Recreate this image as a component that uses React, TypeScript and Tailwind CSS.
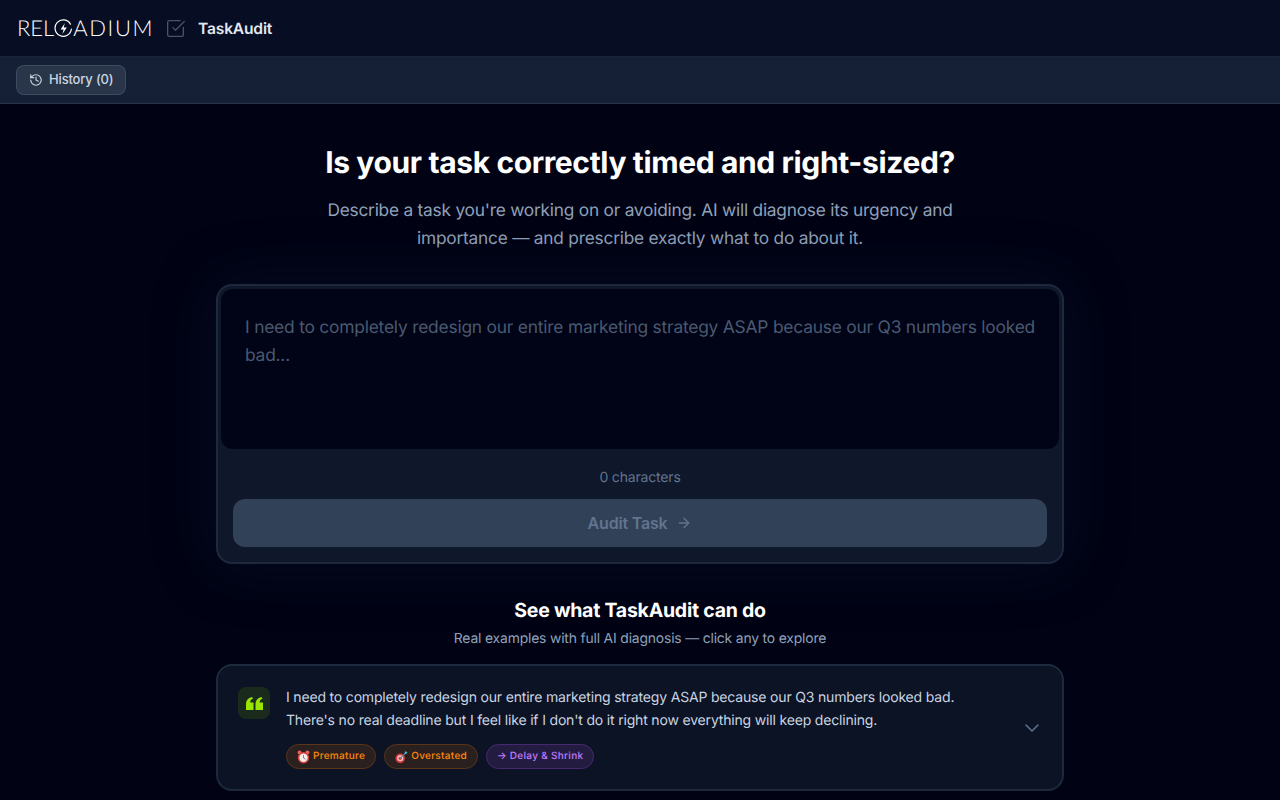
import React from 'react';
import { ArrowRight, ChevronDown, History, SquareCheckBig } from 'lucide-react';

const Pill = ({ className, children }: { className: string; children: React.ReactNode }) => (
  <span className={`inline-flex h-[25px] items-center gap-[3px] rounded-full border px-[10px] text-[10px] font-medium tracking-[0.3px] ${className}`}>
    {children}
  </span>
);

const AlarmClock = () => (
  <svg width="13" height="14" viewBox="0 0 13 14">
    <circle cx="2.600" cy="2.600" r="2" fill="#e8615a" />
    <circle cx="10.400" cy="2.600" r="2" fill="#e8615a" />
    <circle cx="6.500" cy="7.800" r="5.700" fill="#d9403c" />
    <circle cx="6.500" cy="7.800" r="4.200" fill="#f3eeea" />
    <path d="M6.500 5v3l2 1.200" stroke="#6b6b6b" strokeWidth=".8" fill="none" />
  </svg>
);

const Target = () => (
  <svg width="13" height="14" viewBox="0 0 14 14">
    <circle cx="5.600" cy="8.400" r="5.200" fill="#d8383f" />
    <circle cx="5.600" cy="8.400" r="3.300" fill="#f3c9c4" />
    <circle cx="5.600" cy="8.400" r="1.800" fill="#d8383f" />
    <path d="M5.600 8.400 11.500 2.500" stroke="#4d9aa8" strokeWidth="1.200" />
    <path d="M10.500 1.500 12 0.500 12.200 1.800 13.500 2 12.500 3.500 10.500 3.500z" fill="#47c2d6" />
  </svg>
);

const App: React.FC = () => {
  return (
    <div className="h-[800px] overflow-hidden bg-[#010314] font-['Inter',sans-serif] text-white antialiased [text-rendering:geometricPrecision]">
      <header className="flex h-[57px] items-center border-b border-[#1a2335] bg-[#070d22] pl-[17px]">
        <div className="flex items-center font-['Lato',sans-serif] text-[22px] font-light leading-none text-white">
          <span>REL</span>
          <svg width="19" height="19" viewBox="0 0 19 19" fill="none">
            <path d="M16.5 5.2A8.2 8.2 0 1 0 17.4 10" stroke="#fff" strokeWidth="1.2" strokeLinecap="round" />
            <path d="M10.8 4.2 6.6 10.4h3l-1.2 4.6 4.4-6.4H9.7z" fill="#fff" />
          </svg>
          <span className="tracking-[1.6px]">ADIUM</span>
        </div>
        <SquareCheckBig className="ml-[11px] h-[21px] w-[21px] text-slate-600" strokeWidth={1.5} />
        <span className="ml-[12px] mt-[2px] text-[15.6px] font-semibold tracking-[-0.0125em] text-slate-200">TaskAudit</span>
      </header>

      <div className="flex h-[47px] items-center border-b border-[#2a3447] bg-[#151f36] px-4">
        <button className="flex h-[30px] items-center gap-[6px] rounded-lg border border-slate-600/70 bg-[#293548] px-3 text-[13px] font-medium tracking-[-0.0125em] text-slate-300">
          <History className="h-[14px] w-[14px]" />
          History (0)
        </button>
      </div>

      <main className="flex flex-col items-center">
        <h1 className="mt-[41px] text-3xl font-bold leading-[36px] tracking-[-0.0125em] text-white">Is your task correctly timed and right-sized?</h1>
        <p className="mt-[16px] w-[672px] text-center text-[17.3px] leading-[28px] tracking-[-0.0125em] text-slate-400">
          Describe a task you're working on or avoiding. AI will diagnose its urgency and importance — and prescribe exactly what to do about it.
        </p>

        <section className="mt-[31px] w-[848px] rounded-2xl border-2 border-slate-800 bg-[#0f172b] shadow-[0_0_60px_rgba(15,23,50,0.45)]">
          <div className="mx-[3px] mt-[3px] h-[160px] rounded-xl bg-[#010317] pl-6 pr-5 pt-[25px] text-[17.4px] leading-[28px] tracking-[-0.0125em] text-[#4a5a70]">
            I need to completely redesign our entire marketing strategy ASAP because our Q3 numbers looked bad...
          </div>
          <div className="px-[15px] pb-[15px]">
            <div className="mt-[19px] text-center text-sm leading-[20px] tracking-[-0.0125em] text-slate-500">0 characters</div>
            <button className="mt-[11px] flex h-[48px] w-full items-center justify-center gap-[9px] rounded-xl bg-slate-700 text-base font-semibold tracking-[-0.0125em] text-slate-500">
              Audit Task
              <ArrowRight className="h-4 w-4" />
            </button>
          </div>
        </section>

        <h2 className="mt-[32px] text-[19.5px] font-bold leading-[28px] tracking-[-0.0125em] text-white">See what TaskAudit can do</h2>
        <p className="mt-[5px] text-[13.9px] leading-[20px] tracking-[-0.0125em] text-slate-400">Real examples with full AI diagnosis — click any to explore</p>

        <article className="mt-[15px] flex h-[127px] w-[848px] shrink-0 items-center rounded-2xl border-2 border-slate-800 bg-[#0c1325] pl-5 pr-[18px]">
          <div className="mb-[14px] mt-[21px] flex h-8 w-8 shrink-0 items-center justify-center self-start rounded-lg bg-[#1a2a1c]">
            <svg width="17" height="13" viewBox="0 0 17 13" className="fill-lime-400">
              <path d="M0 13V7.4C0 3.400 2.200 1 6 0l1 1.800C5 2.400 4.200 3.600 4.200 5.500H7.500V13zM9.500 13V7.400c0-4 2.200-6.400 6-7.400l1 1.800c-2 .6-2.800 1.800-2.800 3.700H17V13z" />
            </svg>
          </div>
          <div className="ml-4 min-w-0 flex-1">
            <p className="text-sm leading-[23px] tracking-[-0.0125em] text-slate-300">
              I need to completely redesign our entire marketing strategy ASAP because our Q3 numbers looked bad.<br />
              There's no real deadline but I feel like if I don't do it right now everything will keep declining.
            </p>
            <div className="mt-[12px] flex gap-2">
              <Pill className="border-[#5a3517] bg-[#2a2020] text-orange-400"><AlarmClock />Premature</Pill>
              <Pill className="border-[#5a3517] bg-[#2a2020] text-orange-400"><Target />Overstated</Pill>
              <Pill className="border-[#46296e] bg-[#231c40] text-purple-400">→ Delay &amp; Shrink</Pill>
            </div>
          </div>
          <ChevronDown className="h-6 w-6 text-slate-500" strokeWidth={1.5} />
        </article>
      </main>
    </div>
  );
};

export default App;
